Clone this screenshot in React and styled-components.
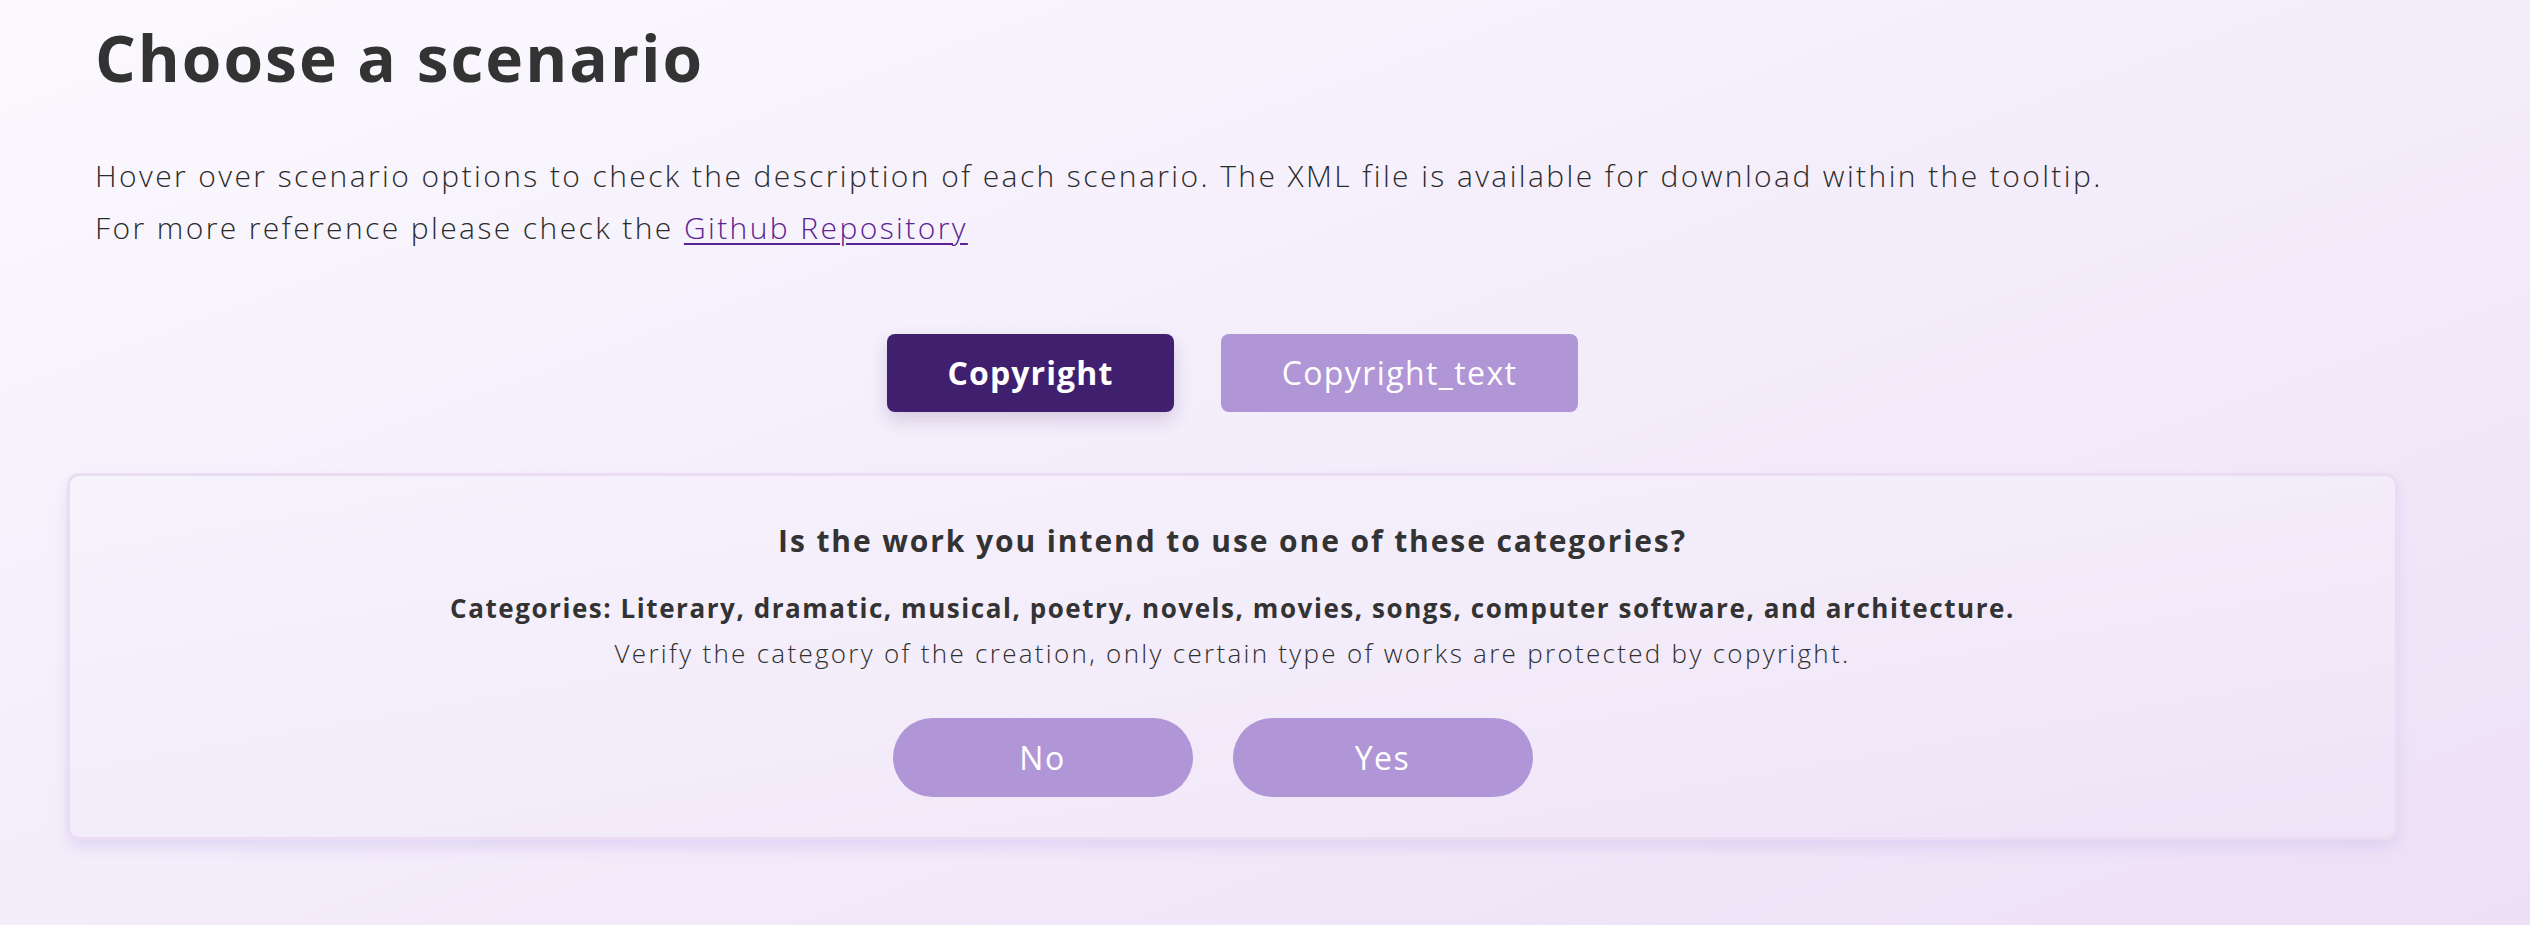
import React, { useState } from "react";
import styled, { createGlobalStyle } from "styled-components";

const GlobalStyle = createGlobalStyle`
	html, body {
		margin: 0;
		padding: 0;
	}

	body {
		min-height: 100vh;
		background: linear-gradient(160deg, #fbf9fe 0%, #f4eefb 45%, #eee0f6 100%);
		font-family: "Open Sans", "Liberation Sans", sans-serif;
		color: #333;
	}
`;

const Page = styled.div`
	width: 2465px;
	box-sizing: border-box;
	padding: 0 67px 60px;
`;

const Intro = styled.div`
	padding-left: 28px;
`;

const Title = styled.h1`
	margin: 20px 0 0;
	font-size: 64px;
	line-height: 76.8px;
	font-weight: 700;
	letter-spacing: 2px;
	color: #333;
`;

const Lead = styled.p`
	margin: 53px 0 0;
	font-size: 30px;
	line-height: 52px;
	font-weight: 300;
	letter-spacing: 2.4px;
	color: #2b2b2b;

	a {
		color: #5a2391;
		text-decoration: underline;
		text-decoration-thickness: 2px;
		text-underline-offset: 4px;
	}
`;

const ScenarioRow = styled.div`
	display: flex;
	justify-content: center;
	gap: 47px;
	margin-top: 80px;
`;

const ScenarioButton = styled.button`
	width: ${(p) => p.$width}px;
	height: 78px;
	border: none;
	border-radius: 8px;
	font-family: inherit;
	font-size: 32px;
	font-weight: ${(p) => (p.$active ? 700 : 400)};
	letter-spacing: ${(p) => (p.$active ? 1.1 : 1.4)}px;
	color: #fff;
	background: ${(p) => (p.$active ? "#401f6f" : "#b096d6")};
	box-shadow: ${(p) =>
		p.$active ? "0 8px 18px rgba(64, 31, 111, 0.18)" : "none"};
	cursor: pointer;
`;

const Card = styled.section`
	margin-top: 61px;
	border: 3px solid #eadcf3;
	border-radius: 12px;
	background: linear-gradient(170deg, #f7f3fc 0%, #f3ecfa 50%, #efe3f7 100%);
	box-shadow: 0 8px 14px rgba(205, 190, 240, 0.45);
	padding: 45px 40px 40px;
	text-align: center;
`;

const Question = styled.h2`
	margin: 0;
	font-size: 30px;
	line-height: 40px;
	font-weight: 700;
	letter-spacing: 1.9px;
	color: #333;
`;

const Details = styled.p`
	margin: 25px 0 0;
	font-size: 26px;
	line-height: 45px;
	font-weight: 300;
	letter-spacing: 2.3px;
	color: #2f2f2f;

	strong {
		font-weight: 700;
		letter-spacing: 1.55px;
		color: #333;
	}
`;

const Answers = styled.div`
	display: flex;
	justify-content: center;
	margin-top: 42px;
`;

const AnswerButton = styled.button`
	width: 300px;
	height: 79px;
	margin-right: 40px;
	border: none;
	border-radius: 40px;
	background: #b096d6;
	color: #fff;
	font-family: inherit;
	font-size: 32px;
	font-weight: 400;
	letter-spacing: 1.5px;
	cursor: pointer;
`;

const scenarios = [
	{ name: "Copyright", width: 287 },
	{ name: "Copyright_text", width: 357 },
];

const App = () => {
	const [active, setActive] = useState("Copyright");

	return (
		<React.Fragment>
			<GlobalStyle />
			<Page>
				<Intro>
					<Title>Choose a scenario</Title>
					<Lead>
						Hover over scenario options to check the description of
						each scenario. The XML file is available for download
						within the tooltip.
						<br />
						For more reference please check the{" "}
						<a href="#repo">Github Repository</a>
					</Lead>
				</Intro>

				<ScenarioRow>
					{scenarios.map((s) => (
						<ScenarioButton
							key={s.name}
							$width={s.width}
							$active={active === s.name}
							onClick={() => setActive(s.name)}
						>
							{s.name}
						</ScenarioButton>
					))}
				</ScenarioRow>

				<Card>
					<Question>
						Is the work you intend to use one of these categories?
					</Question>
					<Details>
						<strong>
							Categories: Literary, dramatic, musical, poetry, novels,
							movies, songs, computer software, and architecture.
						</strong>
						<br />
						Verify the category of the creation, only certain type of
						works are protected by copyright.
					</Details>
					<Answers>
						<AnswerButton>No</AnswerButton>
						<AnswerButton>Yes</AnswerButton>
					</Answers>
				</Card>
			</Page>
		</React.Fragment>
	);
};

export default App;
